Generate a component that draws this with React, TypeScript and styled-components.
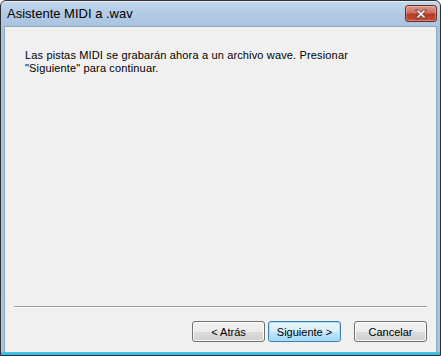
import React from "react";
import styled, { createGlobalStyle } from "styled-components";

const Global = createGlobalStyle`
  html, body { margin: 0; padding: 0; background: #ffffff; }
  body { width: 441px; height: 356px; overflow: hidden; }
`;

const Window = styled.div`
  box-sizing: border-box;
  width: 441px;
  height: 356px;
  display: flex;
  flex-direction: column;
  border: 1px solid #303030;
  border-radius: 6px 6px 0 0;
  background: linear-gradient(to bottom, #c2d7ec 0px, #b3cbe4 12px, #a9c3df 26px, #a9c4e0 100%);
  box-shadow: inset 0 1px 0 rgba(255, 255, 255, 0.6);
  overflow: hidden;
`;

const TitleBar = styled.div`
  height: 25px;
  flex: none;
  display: flex;
  align-items: flex-start;
  justify-content: space-between;
  padding: 0 3px 0 6px;
`;

const Title = styled.span`
  font-family: "Liberation Sans", Arial, sans-serif;
  font-size: 13px;
  line-height: 16px;
  margin-top: 5px;
  color: #000;
`;

const CloseButton = styled.div`
  box-sizing: border-box;
  width: 32px;
  height: 17px;
  margin-top: 4px;
  border: 1px solid #6b2a22;
  border-radius: 3px;
  background: linear-gradient(to bottom, #dc9a8c 0%, #cc6e5c 45%, #b23a24 55%, #c2503a 100%);
  box-shadow: inset 0 0 0 1px rgba(255, 255, 255, 0.3);
  display: flex;
  align-items: center;
  justify-content: center;
`;

const Client = styled.div`
  flex: 1;
  display: flex;
  flex-direction: column;
  margin: 0 3px 0 3px;
  background: #f0f0f0;
  border: 1px solid #8ea6c4;
  border-bottom: none;
`;

const BottomEdge = styled.div`
  flex: none;
  height: 3px;
  background: linear-gradient(to bottom, #49c8ea, #2fb6e0);
`;

const Body = styled.div`
  flex: 1;
  padding: 22px 20px 0 20px;
`;

const Message = styled.p`
  margin: 0;
  width: 330px;
  font-family: "Liberation Sans", Arial, sans-serif;
  font-size: 11px;
  line-height: 13px;
  letter-spacing: 0.15px;
  color: #000;
`;

const Separator = styled.div`
  height: 1px;
  margin: 0 9px 0 9px;
  background: #a0a0a0;
  border-bottom: 1px solid #ffffff;
`;

const ButtonRow = styled.div`
  display: flex;
  justify-content: flex-end;
  padding: 13px 9px 10px 0;
`;

const Button = styled.button<{ $default?: boolean; $gapAfter?: number }>`
  box-sizing: border-box;
  width: 73px;
  height: 21px;
  margin: 0 ${(p) => p.$gapAfter ?? 0}px 0 0;
  padding: 0;
  font-family: "Liberation Sans", Arial, sans-serif;
  font-size: 11px;
  color: #000;
  border-radius: 3px;
  border: 1px solid ${(p) => (p.$default ? "#3c7fb1" : "#707070")};
  background: ${(p) =>
    p.$default
      ? "linear-gradient(to bottom, #eaf6fd 0%, #d9f0fc 50%, #bee6fd 51%, #a7d9f5 100%)"
      : "linear-gradient(to bottom, #f2f2f2 0%, #ebebeb 50%, #dddddd 51%, #cfcfcf 100%)"};
  box-shadow: inset 0 0 0 1px ${(p) => (p.$default ? "#9fe4fb" : "#fcfcfc")};
`;

const CloseGlyph = () => (
  <svg width="14" height="10" viewBox="0 0 14 10">
    <path
      d="M1.5 1 L4.5 1 L7 3.3 L9.5 1 L12.5 1 L8.7 5 L12.5 9 L9.5 9 L7 6.7 L4.5 9 L1.5 9 L5.3 5 Z"
      fill="#ffffff"
      stroke="#5a2018"
      strokeWidth="0.8"
      strokeLinejoin="round"
    />
  </svg>
);

export default function App() {
  return (
    <>
      <Global />
      <Window>
        <TitleBar>
          <Title>Asistente MIDI a .wav</Title>
          <CloseButton>
            <CloseGlyph />
          </CloseButton>
        </TitleBar>
        <Client>
          <Body>
            <Message>
              Las pistas MIDI se grabarán ahora a un archivo wave. Presionar "Siguiente" para continuar.
            </Message>
          </Body>
          <Separator />
          <ButtonRow>
            <Button $gapAfter={3}>&lt; Atrás</Button>
            <Button $default $gapAfter={13}>Siguiente &gt;</Button>
            <Button>Cancelar</Button>
          </ButtonRow>
        </Client>
        <BottomEdge />
      </Window>
    </>
  );
}
